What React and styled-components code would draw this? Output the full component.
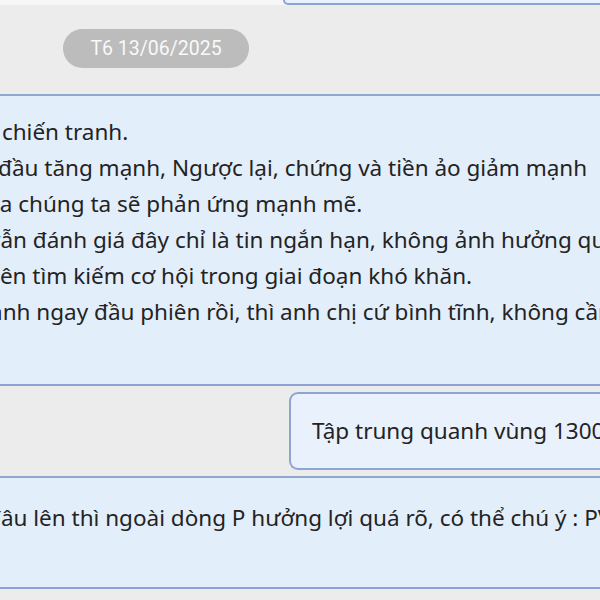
import styled, { createGlobalStyle } from "styled-components"

const GlobalStyle = createGlobalStyle`
    html, body { margin: 0; padding: 0; background: #ececec; }
    body { font-family: "Noto Sans", "Open Sans", sans-serif; color: #222; }
`

// cac dong cua tin nhan dai, phan dau bi cat ngoai khung
const bigLines = [
    { text: "và chiến tranh.", shift: -28 },
    { text: "đầu tăng mạnh, Ngược lại, chứng và tiền ảo giảm mạnh", shift: -2 },
    { text: "của chúng ta sẽ phản ứng mạnh mẽ.", shift: -25 },
    { text: "vẫn đánh giá đây chỉ là tin ngắn hạn, không ảnh hưởng quá nhiều", shift: -11 },
    { text: "nên tìm kiếm cơ hội trong giai đoạn khó khăn.", shift: -14 },
    { text: "mạnh ngay đầu phiên rồi, thì anh chị cứ bình tĩnh, không cần lo", shift: -31 },
]

export default function App(){
    return(
        <>
            <GlobalStyle />
            <Screen>
                <TopRow>
                    <TopBubble />
                </TopRow>
                <DateRow>
                    <DatePill>T6 13/06/2025</DatePill>
                </DateRow>
                <WideBubble $top={18} $bottom={54}>
                    {bigLines.map((l, i) => (
                        <Line key={i} $shift={l.shift}>{l.text}</Line>
                    ))}
                </WideBubble>
                <MineRow>
                    <MineBubble>Tập trung quanh vùng 1300 - 1320</MineBubble>
                </MineRow>
                <WideBubble $top={22} $bottom={51}>
                    <Line $shift={-13}>đâu lên thì ngoài dòng P hưởng lợi quá rõ, có thể chú ý : PVD, PVS</Line>
                </WideBubble>
            </Screen>
        </>
    )
}

const Screen = styled.div`
    width: 600px; height: 600px;
    overflow: hidden;
    background: #ececec;
    display: flex; flex-direction: column;
`

const TopRow = styled.div`
    display: flex; justify-content: flex-end;
    background: #f6f6f6;
`

const TopBubble = styled.div`
    width: 320px; height: 3px;
    margin-right: -7px;
    background: #e8f1fc;
    border: 2px solid #8ea6cf; border-top: none;
    border-bottom-left-radius: 9px;
`

const DateRow = styled.div`
    display: flex;
    padding: 24px 0 26px 63px;
    background: #ececec;
`

const DatePill = styled.div`
    width: 186px; height: 39px;
    border-radius: 20px;
    background: #bcbcbc;
    color: #f9f9f9;
    font-family: Roboto, "Noto Sans", sans-serif;
    font-size: 19.5px;
    display: flex; align-items: center; justify-content: center;
`

const WideBubble = styled.div`
    margin: 0 -40px 0 -20px;
    padding: ${p => p.$top}px 0 ${p => p.$bottom}px 20px;
    background: #e3eefb;
    border-top: 2px solid #8fa8cc;
    border-bottom: 2px solid #8fa2d6;
    font-size: 22.5px; line-height: 36px;
    color: #232323;
`

const Line = styled.div`
    white-space: nowrap;
    text-indent: ${p => p.$shift}px;
`

const MineRow = styled.div`
    display: flex;
    padding: 6px 0 6px 289px;
`

const MineBubble = styled.div`
    flex-shrink: 0;
    width: 340px; height: 74px;
    padding-left: 21px;
    background: #e8f1fc;
    border: 2px solid #8ea6cf; border-right: none;
    border-radius: 9px 0 0 9px;
    font-size: 22.5px; line-height: 74px;
    white-space: nowrap; overflow: hidden;
    color: #232323;
`
